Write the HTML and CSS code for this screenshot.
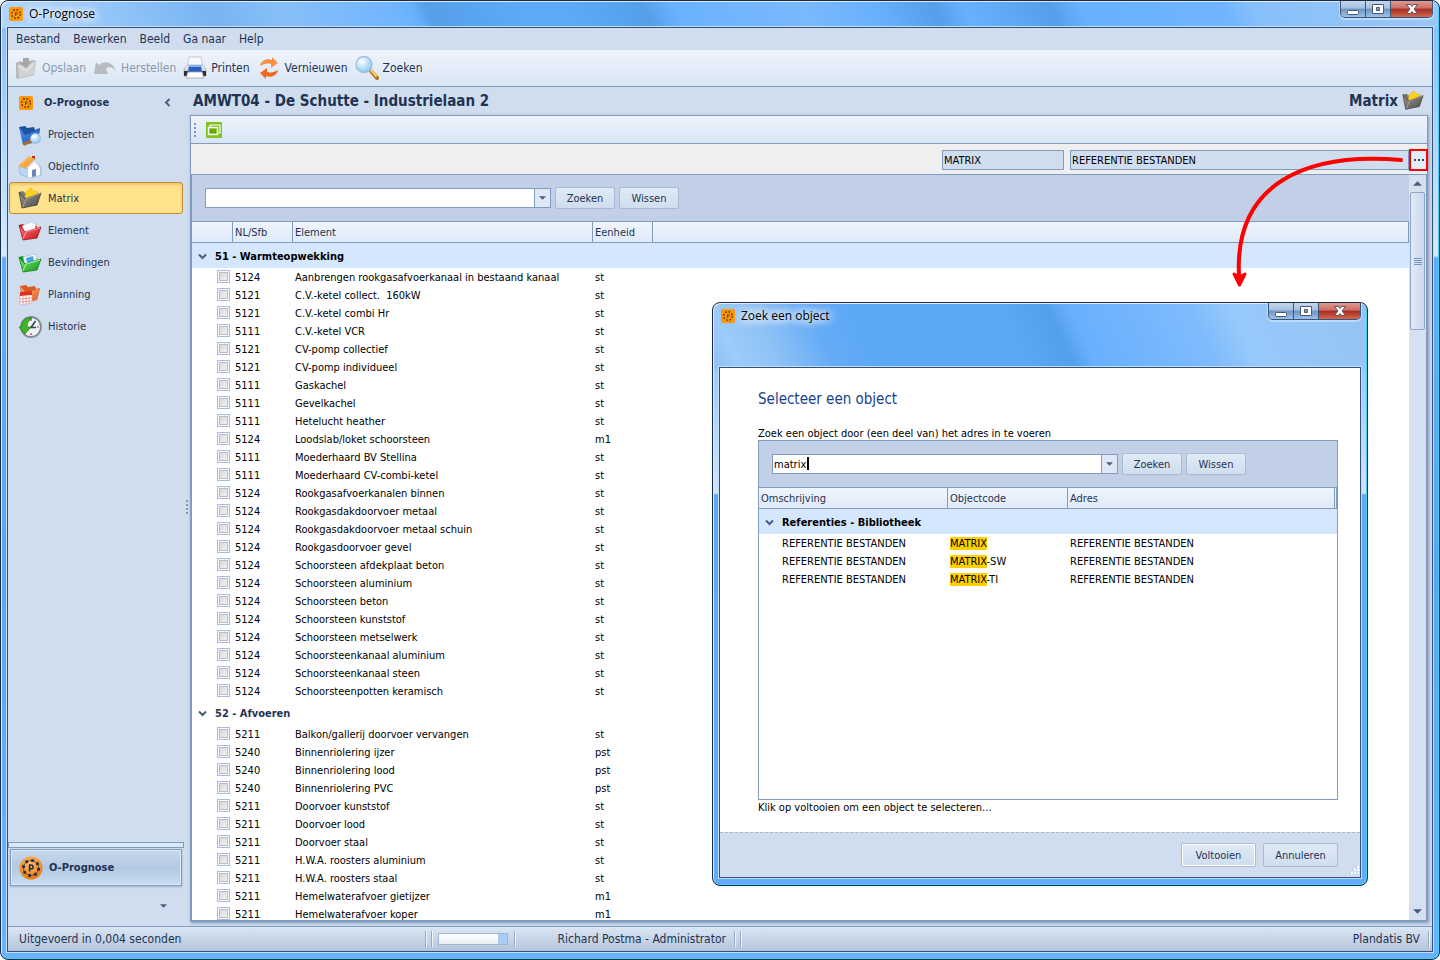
FILE: index.html
```
<!DOCTYPE html>
<html lang="nl">
<head>
	<meta charset="utf-8">
	<meta name="viewport" content="width=device-width, initial-scale=1">
	<title>O-Prognose</title>
	<link rel="stylesheet" href="styles.css">
</head>
<body>
	<!-- shared icons -->
	<svg class="defs" aria-hidden="true">
		<defs>
			<linearGradient id="g-gray" x1="0" y1="0" x2="1" y2="1"><stop offset="0" stop-color="#9a9a94"/><stop offset="1" stop-color="#4c4a44"/></linearGradient>
			<linearGradient id="g-blue" x1="0" y1="0" x2="1" y2="1"><stop offset="0" stop-color="#4f93ee"/><stop offset="1" stop-color="#1b4fae"/></linearGradient>
			<linearGradient id="g-red" x1="0" y1="0" x2="1" y2="1"><stop offset="0" stop-color="#ff8080"/><stop offset="1" stop-color="#c40f1c"/></linearGradient>
			<linearGradient id="g-green" x1="0" y1="0" x2="1" y2="1"><stop offset="0" stop-color="#7fe873"/><stop offset="1" stop-color="#0f9a1a"/></linearGradient>
			<linearGradient id="g-orange" x1="0" y1="0" x2="1" y2="1"><stop offset="0" stop-color="#ffb27a"/><stop offset="1" stop-color="#e2591a"/></linearGradient>
			<linearGradient id="g-roof" x1="0" y1="0" x2="1" y2="1"><stop offset="0" stop-color="#ffcf70"/><stop offset="1" stop-color="#f08a1c"/></linearGradient>
			<linearGradient id="g-print" x1="0" y1="0" x2="0" y2="1"><stop offset="0" stop-color="#f4f5f8"/><stop offset="1" stop-color="#a9aeb8"/></linearGradient>
			<radialGradient id="g-ball" cx=".45" cy=".3" r=".8"><stop offset="0" stop-color="#ffc06a"/><stop offset="1" stop-color="#e56d00"/></radialGradient>
			<radialGradient id="g-lens" cx=".35" cy=".3" r=".8"><stop offset="0" stop-color="#fff"/><stop offset="1" stop-color="#7cc6ee"/></radialGradient>
		</defs>
		<symbol id="app" viewBox="0 0 14 14">
			<rect width="14" height="14" rx="2" fill="#ff9500"/>
			<circle cx="7" cy="7" r="4.3" fill="none" stroke="#5b3d14" stroke-width="1.500" stroke-dasharray="1.700 1.680"/>
			<path d="M6.500 9V5.500h.8a.9.9 0 0 1 0 1.900h-.8" fill="none" stroke="#5b3d14" stroke-width=".8"/>
		</symbol>
		<symbol id="ball" viewBox="0 0 24 24">
			<circle cx="12" cy="12" r="11.5" fill="url(#g-ball)"/>
			<circle cx="12" cy="12" r="7.6" fill="none" stroke="#2a2c42" stroke-width=".7"/>
			<circle cx="12" cy="12" r="7.6" fill="none" stroke="#2a2c42" stroke-width="3" stroke-dasharray="2.600 3.370"/>
			<path d="M10.6 15.500V9h1.600a1.900 1.900 0 0 1 0 3.800h-1.600" fill="none" stroke="#2a2c42" stroke-width="1.600"/>
		</symbol>
		<symbol id="projecten" viewBox="0 0 24 24">
			<path d="M1 4l6-1 2 2 7-1 1 3 5-2-2 14-14 1z" fill="#1f4f9f"/>
			<path d="M1 4l6 8 15-6-3 13-14 3z" fill="url(#g-blue)"/>
			<path d="M13 18l-6 3" stroke="#b86a1e" stroke-width="3" stroke-linecap="round"/>
			<circle cx="17.500" cy="15.500" r="5" fill="url(#g-lens)" stroke="#9cb9d4"/>
		</symbol>
		<symbol id="objectinfo" viewBox="0 0 24 24">
			<path d="M14 1h3v6h-3z" fill="#c62a1c"/>
			<path d="M1 12l7-2 8-6 7 8v8l-12 3-9-4z" fill="#b9d6f5" stroke="#8eabd0" stroke-width=".7"/>
			<path d="M10 13v10l12-3v-8l-6-7z" fill="#fff"/>
			<path d="M0 11L11 1l6 3-9 10z" fill="url(#g-roof)"/>
			<path d="M17 4l6 8-1 1-5-7-8 8-1-1z" fill="#e9eef6" stroke="#9db0cc" stroke-width=".5"/>
			<path d="M14 15l4-1v7l-4 1z" fill="#6b82bb"/>
		</symbol>
		<symbol id="matrix" viewBox="0 0 24 24">
			<path d="M1 5l4-1 2 2 9-1 2 3-12 13z" fill="#7b7972"/>
			<path d="M7 9l1-4 5-4 2 3 5 1-3 7-9 2z" fill="#ffd21a" stroke="#dba500" stroke-width=".5"/>
			<path d="M4 21L1 5l6 7 16-6-4 12z" fill="url(#g-gray)" stroke="#3f3d38" stroke-width=".8"/>
			<path d="M5 20l3-8 15-6" fill="none" stroke="#b5b3a8" stroke-width=".8"/>
		</symbol>
		<symbol id="element" viewBox="0 0 24 24">
			<path d="M1 6l4-1 2 2 11-2 1 4-13 12z" fill="#c4141e"/>
			<path d="M4 7l9-4 5 2-1 7-10 2z" fill="#fafafa" stroke="#bbb" stroke-width=".5"/>
			<path d="M5 21L1 6l6 7 16-5-4 11z" fill="url(#g-red)" stroke="#a5121c" stroke-width=".8"/>
			<path d="M5 20l3-7 14-4" fill="none" stroke="#ffb0b0" stroke-width=".8"/>
		</symbol>
		<symbol id="bevindingen" viewBox="0 0 24 24">
			<path d="M1 6l4-1 2 2 11-2 1 4-13 12z" fill="#17901e"/>
			<path d="M5 6l11-3 3 2-1 7-11 2z" fill="#e9f6ff" stroke="#9ab" stroke-width=".5"/>
			<path d="M8 7l7-2 1 5-7 2z" fill="#4aa7de"/>
			<path d="M5 21L1 6l6 7 16-5-4 11z" fill="url(#g-green)" stroke="#108016" stroke-width=".8"/>
			<path d="M5 20l3-7 14-4" fill="none" stroke="#c5ffb9" stroke-width=".8"/>
		</symbol>
		<symbol id="planning" viewBox="0 0 24 24">
			<path d="M2 3l6-1 2 2 7-1 1 3 4-1-3 12-14 3z" fill="#d95a22"/>
			<path d="M3 4l5 6 14-5-3 12-14 2z" fill="url(#g-orange)"/>
			<path d="M2 11l12-1v10L2 22z" fill="#fff" stroke="#c99" stroke-width=".6"/>
			<path d="M2 9l12-1v4L2 13z" fill="#e0321f"/>
			<path d="M2 16l12-1M2 19l12-1M5 13v8M8 13v8M11 13v7" stroke="#d98a8a" stroke-width=".8"/>
		</symbol>
		<symbol id="historie" viewBox="0 0 24 24">
			<circle cx="13" cy="12" r="10" fill="#eef3f6" stroke="#7f8d94" stroke-width="1.800"/>
			<path d="M13 4v2M13 18v2M5 12h2M19 12h2" stroke="#c33" stroke-width="1.200"/>
			<path d="M17.500 6L13 12.500h5" fill="none" stroke="#33475f" stroke-width="1.600"/>
			<path d="M14 3C7 2 3 7 4 12H1l6 7 6-7H9c0-3 1-6 5-9z" fill="#3fb52a" stroke="#1c7c12" stroke-width=".7"/>
		</symbol>
		<symbol id="opslaan" viewBox="0 0 24 24">
			<path d="M2 7l4-2 3 1 10-2 3 1-2 14-16 4-2-1z" fill="#b9b9b9"/>
			<path d="M4 9l17-3-1 12-15 4z" fill="#d3d3d3"/>
			<path d="M4 10l9 5 8-9" fill="none" stroke="#ececec"/>
			<path d="M9 2h6v4h3l-6 6-7-5h4z" fill="#a6a6a6"/>
		</symbol>
		<symbol id="herstellen" viewBox="0 0 24 24">
			<path d="M1 18L3 6l3 3c6-5 14-3 17 6-3-4-8-5-10-2l2 5z" fill="#b8bbbf"/>
		</symbol>
		<symbol id="printen" viewBox="0 0 24 24">
			<path d="M6 1h12l2 10H4z" fill="#f6f9fd" stroke="#b5bdca" stroke-width=".8"/>
			<path d="M1 13l3-4h16l3 4v7H1z" fill="url(#g-print)" stroke="#9aa1ad" stroke-width=".6"/>
			<path d="M6 9h12l1 7H5z" fill="#2a5fc0"/>
			<path d="M6 9h12v2H6z" fill="#7fb0ee"/>
			<path d="M1 15h4l-1 5H1zM19 15h4v5h-3z" fill="#2b303b"/>
			<path d="M5 16h14l2 6H3z" fill="#fff" stroke="#9da3ae" stroke-width=".8"/>
		</symbol>
		<symbol id="vernieuwen" viewBox="0 0 24 24">
			<path d="M3 10c1-6 7-8 12-6V1l6 6-7 5V8C10 7 7 8 3 10z" fill="#ff9146"/>
			<path d="M21 14c-1 6-7 8-12 6v3l-6-6 7-5v4c5 1 7 0 11-2z" fill="#ee6a1e"/>
		</symbol>
		<symbol id="zoeken" viewBox="0 0 24 24">
			<path d="M16 15l6 7" stroke="#a9741c" stroke-width="4" stroke-linecap="round"/>
			<path d="M16 14l5 6" stroke="#ffd070" stroke-width="2" stroke-linecap="round"/>
			<circle cx="9" cy="8.500" r="8" fill="url(#g-lens)" stroke="#9dbbdc" stroke-width="1.300"/>
		</symbol>
		<symbol id="vensters" viewBox="0 0 16 16">
			<rect width="16" height="16" rx="1" fill="#7fc31c"/>
			<path d="M4 5V3h10v8h-1.500" fill="none" stroke="#fff" stroke-width="1.200"/>
			<rect x="2.500" y="5.500" width="9" height="7" fill="#7fc31c" stroke="#fff" stroke-width="1.400"/>
			<rect x="4" y="7.500" width="6" height="3.500" fill="#5da60a"/>
		</symbol>
		<symbol id="chevron" viewBox="0 0 9 7">
			<path d="M1 1.500l3.500 3.500L8 1.500" fill="none" stroke="#4b5d7f" stroke-width="2"/>
		</symbol>
		<symbol id="arrow" viewBox="0 0 8 4"><path d="M0 0h8L4 4z" fill="#4b5d7f"/></symbol>
		<symbol id="win-min" viewBox="0 0 14 12"><rect x="1.500" y="7.500" width="11" height="4" rx="1" fill="#fff" stroke="#4b5a70"/></symbol>
		<symbol id="win-max" viewBox="0 0 14 12"><path d="M1.500 1.500h11v9h-11zM5.500 4.500h3v3h-3z" fill="#fff" fill-rule="evenodd" stroke="#4b5a70"/></symbol>
		<symbol id="win-close" viewBox="0 0 14 12"><path d="M1.500 1.500h4L7 3.500l1.500-2h4L9 6l3.500 4.500h-4L7 8.500l-1.500 2h-4L5 6z" fill="#fff" stroke="#5b4350" stroke-width=".9"/></symbol>
	</svg>

	<div class="window">
		<header class="titlebar">
			<svg class="app-icon"><use href="#app"/></svg>
			<span class="caption">O-Prognose</span>
			<div class="win-buttons">
				<button aria-label="Minimaliseren"><svg><use href="#win-min"/></svg></button>
				<button aria-label="Maximaliseren"><svg><use href="#win-max"/></svg></button>
				<button class="close" aria-label="Sluiten"><svg><use href="#win-close"/></svg></button>
			</div>
		</header>

		<div class="client">
			<nav class="menu">
				<button>Bestand</button>
				<button>Bewerken</button>
				<button>Beeld</button>
				<button>Ga naar</button>
				<button>Help</button>
			</nav>
			<div class="toolbar">
				<button disabled><svg><use href="#opslaan"/></svg>Opslaan</button>
				<button disabled><svg><use href="#herstellen"/></svg>Herstellen</button>
				<button><svg><use href="#printen"/></svg>Printen</button>
				<button><svg><use href="#vernieuwen"/></svg>Vernieuwen</button>
				<button><svg><use href="#zoeken"/></svg>Zoeken</button>
			</div>

			<div class="content">
				<aside class="sidebar">
					<div class="side-head">
						<svg class="app-icon"><use href="#app"/></svg>
						<b>O-Prognose</b>
						<button class="collapse" aria-label="Inklappen"><svg><use href="#chevron"/></svg></button>
					</div>
					<nav class="side-nav">
						<a href="#"><svg><use href="#projecten"/></svg>Projecten</a>
						<a href="#"><svg><use href="#objectinfo"/></svg>ObjectInfo</a>
						<a href="#" class="active"><svg><use href="#matrix"/></svg>Matrix</a>
						<a href="#"><svg><use href="#element"/></svg>Element</a>
						<a href="#"><svg><use href="#bevindingen"/></svg>Bevindingen</a>
						<a href="#"><svg><use href="#planning"/></svg>Planning</a>
						<a href="#"><svg><use href="#historie"/></svg>Historie</a>
					</nav>
					<div class="side-split"></div>
					<button class="side-group"><svg><use href="#ball"/></svg>O-Prognose</button>
					<div class="side-more">
						<button aria-label="Meer"><svg><use href="#arrow"/></svg></button>
					</div>
				</aside>
				<div class="splitter"><i></i><i></i><i></i><i></i></div>

				<main class="main">
					<div class="main-head">
						<h1>AMWT04 - De Schutte - Industrielaan 2</h1>
						<h2>Matrix <svg><use href="#matrix"/></svg></h2>
					</div>
					<section class="panel">
						<div class="panel-bar">
							<span class="grip"><i></i><i></i><i></i><i></i></span>
							<button aria-label="Vensters"><svg><use href="#vensters"/></svg></button>
						</div>
						<div class="object-row">
							<input class="code" type="text" value="MATRIX" aria-label="Objectcode" readonly>
							<input class="name" type="text" value="REFERENTIE BESTANDEN" aria-label="Object" readonly>
							<button class="browse" aria-label="Zoek een object"><i></i><i></i><i></i></button>
						</div>
						<div class="grid">
							<div class="grid-body">
								<div class="search">
									<div class="combo">
										<input type="text" aria-label="Zoektekst">
										<button aria-label="Openen"><svg><use href="#arrow"/></svg></button>
									</div>
									<button class="btn">Zoeken</button>
									<button class="btn">Wissen</button>
								</div>
								<table class="list">
									<colgroup><col class="c-check"><col class="c-code"><col class="c-name"><col class="c-unit"><col></colgroup>
									<thead>
										<tr><th></th><th>NL/Sfb</th><th>Element</th><th>Eenheid</th><th></th></tr>
									</thead>
									<tbody id="elements"></tbody>
								</table>
							</div>
							<div class="scrollbar">
								<button aria-label="Omhoog"><svg class="up"><use href="#arrow"/></svg></button>
								<div class="thumb"><i></i><i></i><i></i><i></i></div>
								<button class="down" aria-label="Omlaag"><svg><use href="#arrow"/></svg></button>
							</div>
						</div>
					</section>
				</main>
			</div>

			<footer class="status">
				<span class="status-text">Uitgevoerd in 0,004 seconden</span>
				<i></i><i></i>
				<span class="progress"><span></span></span>
				<i></i>
				<span class="user">Richard Postma - Administrator</span>
				<i></i><i></i>
				<span class="company">Plandatis BV</span>
				<i></i>
			</footer>
		</div>
	</div>

	<svg class="pointer" viewBox="0 0 180 140" aria-hidden="true">
		<path d="M171 10C78 2 4 32 9 126" fill="none" stroke="#f00" stroke-width="4" stroke-linecap="round"/>
		<path d="M4 124l5.500 11 5.500-11-5.500 3z" fill="#f00" stroke="#f00" stroke-width="3" stroke-linejoin="round"/>
	</svg>

	<div class="dialog" role="dialog" aria-label="Zoek een object">
		<header class="titlebar">
			<svg class="app-icon"><use href="#app"/></svg>
			<span class="caption">Zoek een object</span>
			<div class="win-buttons">
				<button aria-label="Minimaliseren"><svg><use href="#win-min"/></svg></button>
				<button aria-label="Maximaliseren"><svg><use href="#win-max"/></svg></button>
				<button class="close" aria-label="Sluiten"><svg><use href="#win-close"/></svg></button>
			</div>
		</header>
		<div class="dialog-client">
			<div class="dialog-body">
				<h2>Selecteer een object</h2>
				<label for="zoek">Zoek een object door (een deel van) het adres in te voeren</label>
				<div class="results">
					<div class="search">
						<div class="combo">
							<input type="text" id="zoek" value="matrix">
							<span class="caret"></span>
							<button aria-label="Openen"><svg><use href="#arrow"/></svg></button>
						</div>
						<button class="btn">Zoeken</button>
						<button class="btn">Wissen</button>
					</div>
					<table class="list">
						<colgroup><col class="c-desc"><col class="c-obj"><col><col class="c-end"></colgroup>
						<thead>
							<tr><th>Omschrijving</th><th>Objectcode</th><th>Adres</th><th></th></tr>
						</thead>
						<tbody>
							<tr class="group selected"><td colspan="4"><button><svg><use href="#chevron"/></svg>Referenties - Bibliotheek</button></td></tr>
							<tr><td>REFERENTIE BESTANDEN</td><td><mark>MATRIX</mark></td><td>REFERENTIE BESTANDEN</td><td></td></tr>
							<tr><td>REFERENTIE BESTANDEN</td><td><mark>MATRIX</mark>-SW</td><td>REFERENTIE BESTANDEN</td><td></td></tr>
							<tr><td>REFERENTIE BESTANDEN</td><td><mark>MATRIX</mark>-TI</td><td>REFERENTIE BESTANDEN</td><td></td></tr>
						</tbody>
					</table>
				</div>
				<p>Klik op voltooien om een object te selecteren...</p>
			</div>
			<div class="dialog-foot">
				<button class="btn default">Voltooien</button>
				<button class="btn">Annuleren</button>
				<svg class="resize" viewBox="0 0 10 10"><path d="M8 1h2M5 4h2M8 4h2M2 7h2M5 7h2M8 7h2" stroke="#fff" stroke-width="2"/><path d="M7 1h1M4 4h1M7 4h1M1 7h1M4 7h1M7 7h1" stroke="#a5b4cc" stroke-width="1"/></svg>
			</div>
		</div>
	</div>

	<script>
		let groups=[
			{name:"51 - Warmteopwekking",selected:true,rows:[
				["5124","Aanbrengen rookgasafvoerkanaal in bestaand kanaal","st"],
				["5121","C.V.-ketel collect.  160kW","st"],
				["5121","C.V.-ketel combi Hr","st"],
				["5111","C.V.-ketel VCR","st"],
				["5121","CV-pomp collectief","st"],
				["5121","CV-pomp individueel","st"],
				["5111","Gaskachel","st"],
				["5111","Gevelkachel","st"],
				["5111","Hetelucht heather","st"],
				["5124","Loodslab/loket schoorsteen","m1"],
				["5111","Moederhaard BV Stellina","st"],
				["5111","Moederhaard CV-combi-ketel","st"],
				["5124","Rookgasafvoerkanalen binnen","st"],
				["5124","Rookgasdakdoorvoer metaal","st"],
				["5124","Rookgasdakdoorvoer metaal schuin","st"],
				["5124","Rookgasdoorvoer gevel","st"],
				["5124","Schoorsteen afdekplaat beton","st"],
				["5124","Schoorsteen aluminium","st"],
				["5124","Schoorsteen beton","st"],
				["5124","Schoorsteen kunststof","st"],
				["5124","Schoorsteen metselwerk","st"],
				["5124","Schoorsteenkanaal aluminium","st"],
				["5124","Schoorsteenkanaal steen","st"],
				["5124","Schoorsteenpotten keramisch","st"]
			]},
			{name:"52 - Afvoeren",selected:false,rows:[
				["5211","Balkon/gallerij doorvoer vervangen","st"],
				["5240","Binnenriolering ijzer","pst"],
				["5240","Binnenriolering lood","pst"],
				["5240","Binnenriolering PVC","pst"],
				["5211","Doorvoer kunststof","st"],
				["5211","Doorvoer lood","st"],
				["5211","Doorvoer staal","st"],
				["5211","H.W.A. roosters aluminium","st"],
				["5211","H.W.A. roosters staal","st"],
				["5211","Hemelwaterafvoer gietijzer","m1"],
				["5211","Hemelwaterafvoer koper","m1"]
			]}
		];
		let html=``;
		for(let group of groups)
		{
			html+=`<tr class="group ${group.selected?'selected':''}"><td colspan="5"><button><svg><use href="#chevron"/></svg>${group.name}</button></td></tr>`;
			for(let [code,name,unit] of group.rows)
			{
				html+=`<tr><td><input type="checkbox" aria-label="${name}"></td><td>${code}</td><td>${name}</td><td>${unit}</td><td></td></tr>`;
			}
		}
		document.getElementById('elements').innerHTML=html;
	</script>
</body>
</html>
```
FILE: styles.css
```
*{
	margin: 0;
	padding: 0;
	box-sizing: border-box;
}
:root{
	--line: #829bc0;
	--navy: #1f3353;
	--face: #d0ddee;
	--bar: linear-gradient(#eef4fd,#d9e5f3);
}
body{
	position: relative;
	height: 100vh;
	overflow: hidden;
	background: #fff;
	color: #000;
	font: 11px/15px "DejaVu Sans Condensed","DejaVu Sans",sans-serif;
}
button,input{
	font: inherit;
	color: inherit;
	border: 0;
	background: none;
}
button{
	display: flex;
	align-items: center;
	white-space: nowrap;
}
svg{
	display: block;
	flex: none;
}
.defs{
	position: absolute;
	width: 0;
	height: 0;
}

/* window frames */
.window,.dialog{
	display: flex;
	flex-direction: column;
	padding: 0 6px 7px;
	border: 1px solid #1b2b45;
	border-radius: 8px;
	box-shadow: inset 1px 1px #dcecfb,inset -1px -1px #3fd2ff;
}
.window{
	height: 100vh;
	background:
		linear-gradient(65deg,#b4d7fd 0,#94c5f8 8%,#78b4f3 15%,#88bff8 20%,#6fb5fe 28%,#66b0fd 29%,#569fe9 30%,#5ba9f7 36%,#5ba9f7 40%,#559fe9 45%,#6ab2ff 47%,#79b9fc 56%,#68b0fd 61%,#549eea 65%,#67b1ff 67%,#559fea 73%,#68b1ff 75%,#70b5ff 85%,#88c0fb 87%,#9cc7f5 100%) 0 0/100% 27px no-repeat,
		linear-gradient(#7fbcfb,#d6eafd 255px,#62abf9 257px,#5aa5f3 60%,#6ab2ff);
}
.dialog{
	position: absolute;
	top: 302px;
	right: 72px;
	width: 656px;
	background:
		linear-gradient(65deg,#8fc0f5 0,#9dcbfa 4%,#8fc2f6 10%,#64acf6 18%,#5ca8f6 25%,#5ba8f7 46%,#539fee 53%,#68b0fe 56%,#74b6fd 66%,#7fbcfd 74%,#98c9fb 80%,#95c3f3 100%) 0 0/100% 66px no-repeat,
		linear-gradient(#7fbcfb,#cfe6fc 190px,#5ea9f8 192px,#61abf9);
}
.titlebar{
	display: flex;
	height: 26px;
	padding-left: 2px;
	color: #000;
}
.dialog .titlebar{
	height: 64px;
}
.titlebar .app-icon{
	margin-top: 6px;
}
.app-icon{
	width: 14px;
	height: 14px;
}
.caption{
	height: 16px;
	margin: 5px auto 0 6px;
	font: 12px/16px "Open Sans",sans-serif;
	text-shadow: 0 0 8px #fff,0 0 8px #fff,0 0 12px #fff,0 0 16px #fff;
}
.win-buttons{
	display: flex;
	height: 17px;
	border: 1px solid #3d5474;
	border-top: 0;
	border-radius: 0 0 5px 5px;
	box-shadow: 0 1px 0 1px #b9dbff;
	overflow: hidden;
}
.win-buttons button{
	width: 25px;
	justify-content: center;
	border-right: 1px solid #3d5474;
	background: linear-gradient(#c5d8ee,#a5c0e0 45%,#6d94c2 50%,#9cc3ea);
}
.win-buttons .close{
	width: 41px;
	border-right: 0;
	background: linear-gradient(#dd9a92,#c96f64 45%,#a92b20 50%,#cf6a51);
}
.win-buttons svg{
	width: 14px;
	height: 12px;
}
.client{
	flex: 1;
	min-height: 0;
	display: flex;
	flex-direction: column;
	border: 1px solid #33517c;
	box-shadow: 0 0 0 1px #bfdefc;
	background: var(--face);
	color: var(--navy);
}

/* menu and toolbar */
.menu{
	display: flex;
	gap: 13px;
	height: 22px;
	padding-left: 8px;
	font-size: 12px;
}
.toolbar{
	display: flex;
	gap: 7px;
	height: 37px;
	padding-left: 6px;
	border-bottom: 1px solid var(--line);
	background: var(--bar);
	font-size: 12px;
}
.toolbar button{
	gap: 4px;
}
.toolbar button:disabled{
	color: #8d99ab;
}
.toolbar svg,.side-nav svg,.side-group svg{
	width: 24px;
	height: 24px;
}
.content{
	flex: 1;
	min-height: 0;
	display: flex;
}

/* sidebar */
.sidebar{
	width: 176px;
	display: flex;
	flex-direction: column;
}
.side-head{
	display: flex;
	align-items: center;
	gap: 11px;
	height: 31px;
	padding: 0 12px 0 11px;
}
.collapse{
	margin-left: auto;
}
.collapse svg{
	width: 9px;
	height: 7px;
	transform: rotate(90deg);
}
.side-nav{
	flex: 1;
	margin: 0 1px;
}
.side-nav a{
	display: flex;
	align-items: center;
	gap: 6px;
	height: 32px;
	padding-left: 8px;
	border: 1px solid transparent;
	border-radius: 3px;
	color: var(--navy);
	text-decoration: none;
}
.side-nav svg{
	margin-top: 2px;
}
.side-nav .active{
	border-color: #c98a35;
	background: #ffe28a;
	box-shadow: inset 0 2px 2px #f3c46b;
}
.side-split{
	height: 6px;
	border: 1px solid var(--line);
	background: #dbe8f7;
}
.side-group{
	height: 37px;
	margin: 1px 2px 0;
	padding-left: 8px;
	gap: 6px;
	border: 1px solid var(--line);
	background: linear-gradient(#c8d8ec,#b3c9e4 50%,#c9dcf0);
	box-shadow: inset 0 0 0 1px #dfeaf7,0 1px 2px #9fb0c8;
	font-weight: bold;
}
.side-more{
	display: flex;
	justify-content: flex-end;
	height: 40px;
	padding-right: 17px;
}
.side-more svg,.combo svg{
	width: 7px;
	height: 4px;
}
.splitter{
	width: 6px;
	display: flex;
	flex-direction: column;
	justify-content: center;
	align-items: center;
	gap: 2px;
}
.splitter i,.grip i{
	width: 2px;
	height: 2px;
	background: #8095b8;
}

/* main panel */
.main{
	flex: 1;
	min-width: 0;
	display: flex;
	flex-direction: column;
	padding: 0 4px 4px 0;
}
.main-head{
	display: flex;
	justify-content: space-between;
	align-items: center;
	height: 28px;
	padding: 0 4px 0 3px;
}
h1,.main-head h2{
	display: flex;
	align-items: center;
	gap: 4px;
	font-size: 15px;
	line-height: 20px;
}
.main-head svg{
	width: 22px;
	height: 22px;
}
.panel{
	flex: 1;
	min-height: 0;
	display: flex;
	flex-direction: column;
	border: 1px solid var(--line);
	box-shadow: 1px 1px 3px #8398b8;
	background: #efefef;
}
.panel-bar{
	display: flex;
	align-items: center;
	gap: 10px;
	height: 28px;
	padding-left: 3px;
	border-bottom: 1px solid var(--line);
	background: var(--bar);
}
.grip{
	display: flex;
	flex-direction: column;
	gap: 2px;
}
.panel-bar svg{
	width: 16px;
	height: 16px;
}
.object-row{
	display: flex;
	justify-content: flex-end;
	align-items: center;
	height: 30px;
	padding-top: 2px;
	color: #000;
}
.object-row input{
	height: 20px;
	padding: 0 1px;
	border: 1px solid var(--line);
	background: var(--face);
}
.object-row .code{
	width: 122px;
	margin-right: 6px;
}
.object-row .name{
	width: 339px;
}
.browse{
	justify-content: center;
	gap: 2px;
	width: 19px;
	height: 22px;
	margin-right: -1px;
	border: 2px solid #f00;
	background: #e3edf9;
}
.browse i{
	width: 2px;
	height: 2px;
	background: #33486e;
}
.grid{
	flex: 1;
	min-height: 0;
	display: flex;
	border: 1px solid var(--line);
	background: #fff;
}
.grid-body{
	flex: 1;
	min-width: 0;
	overflow: hidden;
}
.search{
	display: flex;
	align-items: center;
	gap: 4px;
	height: 46px;
	padding-left: 13px;
	background: #c1d0e6;
	color: var(--navy);
}
.combo{
	position: relative;
	display: flex;
	width: 346px;
	height: 20px;
	border: 1px solid var(--line);
	background: #fff;
	color: #000;
}
.combo input{
	flex: 1;
	min-width: 0;
	padding: 0 1px;
	outline: 0;
}
.combo button{
	justify-content: center;
	width: 16px;
	border-left: 1px solid var(--line);
	background: #dfe9f6;
}
.caret{
	position: absolute;
	top: 2px;
	left: 34px;
	width: 2px;
	height: 13px;
	background: #000;
}
.btn{
	justify-content: center;
	width: 60px;
	height: 22px;
	border: 1px solid #a9bad5;
	border-radius: 2px;
	background: linear-gradient(#e0eaf6,#cfddee);
	color: var(--navy);
}

/* lists */
.list{
	width: 100%;
	table-layout: fixed;
	border-spacing: 0;
	color: #000;
}
.list th{
	height: 22px;
	padding: 0 3px 0 2px;
	border: solid var(--line);
	border-width: 1px 1px 1px 0;
	background: linear-gradient(#f0f5fd,#dfeaf8);
	color: var(--navy);
	font-weight: normal;
	text-align: left;
}
.list td{
	height: 18px;
	padding: 1px 3px 0 2px;
	white-space: pre;
}
.c-check{
	width: 41px;
}
.c-code,.c-unit{
	width: 60px;
}
.c-name{
	width: 300px;
}
.list .group td{
	height: 25px;
	padding-left: 6px;
	color: var(--navy);
	font-weight: bold;
}
.list .selected td{
	background: #d5e6ff;
	color: #000;
}
.group button{
	gap: 8px;
}
.group svg{
	width: 9px;
	height: 7px;
}
.list input{
	appearance: none;
	display: block;
	width: 13px;
	height: 13px;
	margin: 0 0 2px auto;
	border: 1px solid #a9bedd;
	background: linear-gradient(135deg,#d6d6d8,#f4f4f4) content-box;
	padding: 1px;
	box-shadow: inset 0 0 0 1px #f6f9fd,inset 0 0 0 2px #b9bdc6;
}
.scrollbar{
	width: 17px;
	display: flex;
	flex-direction: column;
	align-items: center;
	background: #d5e1f1;
}
.scrollbar button{
	justify-content: center;
	width: 17px;
	height: 17px;
}
.scrollbar svg{
	width: 9px;
	height: 5px;
}
.scrollbar .up{
	transform: rotate(180deg);
}
.scrollbar .down{
	margin-top: auto;
}
.thumb{
	display: flex;
	flex-direction: column;
	justify-content: center;
	align-items: center;
	gap: 1px;
	width: 15px;
	height: 138px;
	border: 1px solid #8ea6ca;
	border-radius: 2px;
	background: linear-gradient(90deg,#e0eaf7,#cbd9ed);
}
.thumb i{
	width: 8px;
	height: 1px;
	background: #7f94b8;
}

/* status bar */
.status{
	display: flex;
	align-items: center;
	height: 25px;
	padding: 0 2px 0 11px;
	border-top: 1px solid var(--line);
	background: linear-gradient(#dae6f4,#b4c4d8);
	font-size: 12px;
}
.status i{
	width: 2px;
	height: 16px;
	margin-right: 4px;
	border-left: 1px solid #96abc8;
	background: #eef4fb;
}
.status-text{
	width: 406px;
}
.progress{
	display: flex;
	justify-content: flex-end;
	width: 70px;
	height: 12px;
	margin: 0 6px 0 1px;
	border: 1px solid #9fb6d6;
	background: linear-gradient(#fff,#e9eef4);
}
.progress span{
	width: 9px;
	background: #a9cdf0;
}
.status .user{
	width: 206px;
	text-align: right;
	margin-right: 8px;
}
.status .company{
	margin-left: auto;
	margin-right: 8px;
}
.status .company + i{
	margin-right: 0;
}

/* red arrow over the panel */
.pointer{
	position: absolute;
	top: 150px;
	right: 30px;
	width: 180px;
	height: 140px;
}

/* dialog */
.dialog-client{
	border: 1px solid #33517c;
	box-shadow: 0 0 0 1px #bfdefc;
	background: #fff;
}
.dialog-body{
	padding: 20px 22px 17px 38px;
}
.dialog-body h2{
	margin-bottom: 18px;
	color: #17408f;
	font-size: 15px;
	font-weight: normal;
	line-height: 22px;
}
.dialog-body label{
	display: block;
	line-height: 12px;
}
.results{
	height: 360px;
	border: 1px solid var(--line);
}
.c-desc{
	width: 189px;
}
.c-obj{
	width: 120px;
}
.c-end{
	width: 2px;
}
.results .list th:last-child{
	padding: 0;
}
.results .list td:first-child{
	padding-left: 23px;
}
.results .list .group td{
	padding-left: 6px;
}
.results .list td:last-child:not(:first-child){
	padding: 0;
}
mark{
	background: #ffd000;
}
.dialog-foot{
	position: relative;
	display: flex;
	justify-content: flex-end;
	align-items: center;
	gap: 7px;
	height: 45px;
	padding-right: 22px;
	border-top: 1px dashed #a5b8d3;
	background: var(--face);
}
.dialog-foot .btn{
	width: 75px;
	height: 24px;
}
.dialog-foot .default{
	box-shadow: inset 0 0 0 1px #fff;
}
.resize{
	position: absolute;
	right: 1px;
	bottom: 1px;
	width: 10px;
	height: 10px;
}
```
